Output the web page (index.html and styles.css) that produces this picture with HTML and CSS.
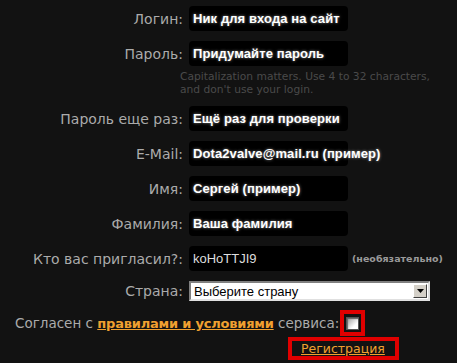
FILE: index.html
```html
<!DOCTYPE html>
<html>
<head>
<meta charset="utf-8">
<link rel="stylesheet" href="styles.css">
</head>
<body>
<form class="form">
  <div class="row">
    <label class="label">Логин:</label>
    <div class="field"><span class="value">Ник для входа на сайт</span></div>
  </div>
  <div class="row row-hint">
    <label class="label">Пароль:</label>
    <div class="field"><span class="value">Придумайте пароль</span></div>
    <div class="hint">Capitalization matters. Use 4 to 32 characters,<br>and don't use your login.</div>
  </div>
  <div class="row">
    <label class="label">Пароль еще раз:</label>
    <div class="field"><span class="value">Ещё раз для проверки</span></div>
  </div>
  <div class="row">
    <label class="label">E-Mail:</label>
    <div class="field"><span class="value">Dota2valve@mail.ru (пример)</span></div>
  </div>
  <div class="row">
    <label class="label">Имя:</label>
    <div class="field"><span class="value">Сергей (пример)</span></div>
  </div>
  <div class="row">
    <label class="label">Фамилия:</label>
    <div class="field"><span class="value">Ваша фамилия</span></div>
  </div>
  <div class="row">
    <label class="label">Кто вас пригласил?:</label>
    <div class="field"><span class="value plain">koHoTTJI9</span></div>
    <span class="optional">(необязательно)</span>
  </div>
  <div class="row row-select">
    <label class="label">Страна:</label>
    <div class="select"><span class="select-text">Выберите страну</span><span class="select-btn"><svg width="7" height="4" viewBox="0 0 7 4"><path d="M0 0h7L3.5 4z" fill="#000"/></svg></span></div>
  </div>
  <div class="agree">
    <span class="agree-text">Согласен с <a class="rules" href="#">правилами и условиями</a> сервиса:</span>
    <span class="mark"><span class="checkbox"></span></span>
  </div>
  <div class="submit-row">
    <a class="submit" href="#">Регистрация</a>
  </div>
</form>
</body>
</html>
```
FILE: styles.css
```css
html, body {
  margin: 0;
  padding: 0;
  background: #121212;
}
.form {
  display: flex;
  flex-direction: column;
  gap: 10px;
  padding-top: 6px;
  font-family: "DejaVu Sans", sans-serif;
}
.row {
  display: flex;
  align-items: center;
  height: 25px;
}
.row-hint {
  flex-wrap: wrap;
  height: auto;
}
.label {
  width: 183px;
  text-align: right;
  color: #ababab;
  font-size: 14px;
  margin-right: 6px;
  flex: none;
}
.field {
  width: 159px;
  height: 25px;
  background: #000;
  border-radius: 4px;
  display: flex;
  align-items: center;
  padding-left: 4px;
  box-sizing: border-box;
  flex: none;
}
.value {
  font-family: "Liberation Sans", sans-serif;
  font-weight: bold;
  font-size: 13px;
  letter-spacing: 0.1px;
  color: #fff;
  text-shadow: 0 0 3px rgba(255,255,255,0.55);
  white-space: nowrap;
}
.value.plain {
  font-weight: normal;
  color: #ddd;
  text-shadow: none;
  font-size: 13px;
  letter-spacing: 0;
}
.hint {
  width: 100%;
  padding-left: 180px;
  margin-top: 5px;
  font-size: 10.7px;
  line-height: 12.5px;
  color: #4a4a4a;
  box-sizing: border-box;
}
.optional {
  margin-left: 4px;
  font-family: "DejaVu Sans", sans-serif;
  font-weight: bold;
  font-size: 9.5px;
  color: #9a9a9a;
  margin-top: 0;
}
.row-select {
  height: 20px;
}
.select {
  width: 241px;
  height: 20px;
  box-sizing: border-box;
  background: #fff;
  border: 2px solid;
  border-color: #808080 #e0e0e0 #e0e0e0 #808080;
  display: flex;
  align-items: center;
  justify-content: space-between;
}
.select-text {
  font-family: "Liberation Sans", sans-serif;
  font-size: 13px;
  color: #000;
  padding-left: 3px;
}
.select-btn {
  width: 14px;
  height: 14px;
  margin-right: 1px;
  background: #d4d0c8;
  box-sizing: border-box;
  border: 1px solid;
  border-color: #fff #404040 #404040 #fff;
  display: flex;
  align-items: center;
  justify-content: center;
}
.agree {
  display: flex;
  align-items: center;
  padding-left: 15px;
  height: 26px;
  margin-top: -1px;
}
.agree-text {
  font-size: 13.5px;
  color: #ababab;
  margin-right: 1px;
}
.rules {
  color: #f0a030;
  font-weight: bold;
  font-size: 13px;
  letter-spacing: -0.2px;
  text-decoration: underline;
}
.mark {
  width: 25px;
  height: 26px;
  box-sizing: border-box;
  border: 4px solid #e00000;
  display: flex;
  align-items: center;
  justify-content: center;
}
.checkbox {
  width: 13px;
  height: 13px;
  box-sizing: border-box;
  border: 1px solid #555;
  background: linear-gradient(135deg, #9a9a9a 0%, #fff 70%, #fff 100%);
  box-shadow: inset 1px 1px 1px #666;
}
.submit-row {
  display: flex;
  padding-left: 288px;
  margin-top: -9px;
}
.submit {
  width: 111px;
  height: 23px;
  box-sizing: border-box;
  border: 4px solid #e00000;
  display: flex;
  align-items: center;
  padding-left: 9px;
  font-family: "DejaVu Sans", sans-serif;
  font-size: 12.5px;
  color: #f0a030;
  text-decoration: underline;
}
```
